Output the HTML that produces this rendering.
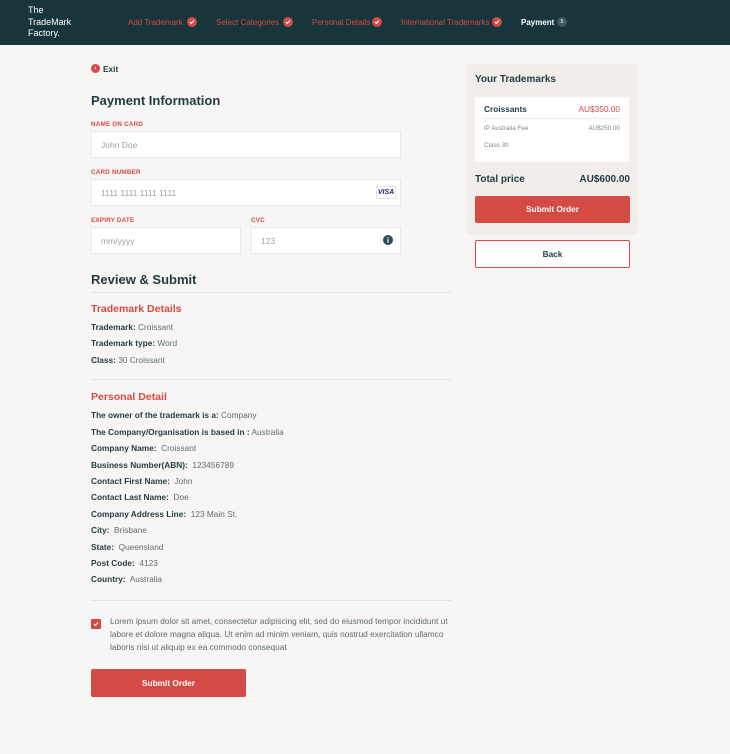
<!DOCTYPE html>
<html><head><meta charset="utf-8"><style>
*{margin:0;padding:0;box-sizing:border-box}
body{width:730px;height:754px;background:#f8f6f4;font-family:"Liberation Sans",sans-serif;position:relative;overflow:hidden;color:#1f3b40}
.a{position:absolute;white-space:nowrap}
.hdr{position:absolute;left:0;top:0;width:730px;height:45px;background:#17353a}
.logo{left:28px;top:5px;color:#fff;font-size:9px;line-height:11.5px;white-space:normal}
.nav{top:18px;font-size:8px;color:#d44b45}
.chk{width:10px;height:10px;border-radius:50%;background:#d44b45;top:17px}
.chk svg{position:absolute;left:2px;top:2px}
.lbl{font-size:6.3px;font-weight:bold;color:#d44b45;letter-spacing:.2px}
.inp{background:#fff;border:1px solid #ebe8e5;height:27px;font-size:8.5px;color:#9aa4a7;padding:8px 9px;position:absolute}
.row{font-size:8.3px;color:#5d6b6e;left:91px}
.row b{color:#1f3b40}
.h2{font-size:13px;font-weight:bold;left:91px}
.h3{font-size:10.5px;font-weight:bold;color:#d44b45;left:91px}
.hr{position:absolute;left:91px;width:361px;height:1px;background:#e6e3e0}
.r{text-align:right}
</style></head><body>
<div class="hdr"></div>
<div class="a logo">The<br>TradeMark<br>Factory.</div>
<div class="a nav" style="left:128px">Add Trademark</div>
<div class="a chk" style="left:187px"><svg width="6" height="6" viewBox="0 0 6 6"><path d="M1 3l1.4 1.4L5 1.5" stroke="#fff" stroke-width="1.1" fill="none"/></svg></div>
<div class="a nav" style="left:216px">Select Categories</div>
<div class="a chk" style="left:283px"><svg width="6" height="6" viewBox="0 0 6 6"><path d="M1 3l1.4 1.4L5 1.5" stroke="#fff" stroke-width="1.1" fill="none"/></svg></div>
<div class="a nav" style="left:312px">Personal Details</div>
<div class="a chk" style="left:372px"><svg width="6" height="6" viewBox="0 0 6 6"><path d="M1 3l1.4 1.4L5 1.5" stroke="#fff" stroke-width="1.1" fill="none"/></svg></div>
<div class="a nav" style="left:401px">International Trademarks</div>
<div class="a chk" style="left:492px"><svg width="6" height="6" viewBox="0 0 6 6"><path d="M1 3l1.4 1.4L5 1.5" stroke="#fff" stroke-width="1.1" fill="none"/></svg></div>
<div class="a nav" style="left:521px;color:#fff;font-weight:bold">Payment</div>
<div class="a" style="left:557px;top:17px;width:10px;height:10px;border-radius:50%;background:#3d5a60;color:#fff;font-size:5px;text-align:center;line-height:10px">5</div>

<div class="a" style="left:91px;top:64px;width:9px;height:9px;border-radius:50%;background:#d44b45;color:#fff;font-size:7px;line-height:9px;text-align:center;font-weight:bold">‹</div>
<div class="a" style="left:103px;top:64px;font-size:8.3px;font-weight:bold">Exit</div>

<div class="a h2" style="top:93px">Payment Information</div>
<div class="a lbl" style="left:91px;top:121px">NAME ON CARD</div>
<div class="inp" style="left:91px;top:131px;width:310px">John Doe</div>
<div class="a lbl" style="left:91px;top:169px">CARD NUMBER</div>
<div class="inp" style="left:91px;top:179px;width:310px">1111 1111 1111 1111</div>
<div class="a" style="left:376px;top:186px;width:20px;height:13px;border:1px solid #e6e3e0;background:#fff;font-size:7px;font-weight:bold;font-style:italic;color:#1a2a6c;text-align:center;line-height:11px">VISA</div>
<div class="a lbl" style="left:91px;top:217px">EXPIRY DATE</div>
<div class="inp" style="left:91px;top:227px;width:150px">mm/yyyy</div>
<div class="a lbl" style="left:251px;top:217px">CVC</div>
<div class="inp" style="left:251px;top:227px;width:150px">123</div>
<svg class="a" style="left:383px;top:235px" width="10" height="10" viewBox="0 0 10 10"><circle cx="5" cy="5" r="5" fill="#2f4a50"/><rect x="4.4" y="4.2" width="1.2" height="3.6" fill="#fff"/><circle cx="5" cy="2.9" r=".7" fill="#fff"/></svg>

<div class="a h2" style="top:272px">Review &amp; Submit</div>
<div class="hr" style="top:292px"></div>
<div class="a h3" style="top:303px">Trademark Details</div>
<div class="a row" style="top:322px"><b>Trademark:</b> Croissant</div>
<div class="a row" style="top:338px"><b>Trademark type:</b> Word</div>
<div class="a row" style="top:355px"><b>Class:</b> 30 Croissant</div>
<div class="hr" style="top:379px"></div>
<div class="a h3" style="top:391px">Personal Detail</div>
<div class="a row" style="top:410px"><b>The owner of the trademark is a:</b> Company</div>
<div class="a row" style="top:427px"><b>The Company/Organisation is based in :</b> Australia</div>
<div class="a row" style="top:443px"><b>Company Name:</b>&nbsp; Croissant</div>
<div class="a row" style="top:460px"><b>Business Number(ABN):</b>&nbsp; 123456789</div>
<div class="a row" style="top:476px"><b>Contact First Name:</b>&nbsp; John</div>
<div class="a row" style="top:492px"><b>Contact Last Name:</b>&nbsp; Doe</div>
<div class="a row" style="top:509px"><b>Company Address Line:</b>&nbsp; 123 Main St.</div>
<div class="a row" style="top:525px"><b>City:</b>&nbsp; Brisbane</div>
<div class="a row" style="top:542px"><b>State:</b>&nbsp; Queensland</div>
<div class="a row" style="top:558px"><b>Post Code:</b>&nbsp; 4123</div>
<div class="a row" style="top:574px"><b>Country:</b>&nbsp; Australia</div>
<div class="hr" style="top:600px"></div>
<div class="a" style="left:91px;top:619px;width:10px;height:10px;background:#d44b45;border-radius:1px"><svg style="position:absolute;left:2px;top:2px" width="6" height="6" viewBox="0 0 6 6"><path d="M1 3l1.4 1.4L5 1.5" stroke="#fff" stroke-width="1.1" fill="none"/></svg></div>
<div class="a" style="left:110px;top:615px;width:340px;white-space:normal;font-size:8.3px;line-height:13px;color:#5d6b6e">Lorem ipsum dolor sit amet, consectetur adipiscing elit, sed do eiusmod tempor incididunt ut labore et dolore magna aliqua. Ut enim ad minim veniam, quis nostrud exercitation ullamco laboris nisi ut aliquip ex ea commodo consequat</div>
<div class="a" style="left:91px;top:669px;width:155px;height:28px;background:#d44b45;border-radius:2px;color:#fff;font-size:8.3px;font-weight:bold;text-align:center;line-height:28px">Submit Order</div>

<div class="a" style="left:466px;top:64px;width:172px;height:171px;background:#f1edea;border-radius:4px"></div>
<div class="a" style="left:475px;top:74px;font-size:10px;font-weight:bold">Your Trademarks</div>
<div class="a" style="left:475px;top:97px;width:154px;height:65px;background:#fff;border-radius:2px"></div>
<div class="a" style="left:484px;top:104px;font-size:8.3px;font-weight:bold">Croissants</div>
<div class="a r" style="left:560px;width:60px;top:104px;font-size:8.3px;color:#d44b45">AU$350.00</div>
<div class="a" style="left:484px;top:118px;width:136px;height:1px;background:#eeeae7"></div>
<div class="a" style="left:484px;top:125px;font-size:6.3px;color:#7b878a">IP Australia Fee</div>
<div class="a r" style="left:560px;width:60px;top:125px;font-size:6.3px;color:#7b878a">AU$250.00</div>
<div class="a" style="left:484px;top:142px;font-size:6.3px;color:#7b878a">Class 30</div>
<div class="a" style="left:475px;top:174px;font-size:10px;font-weight:bold">Total price</div>
<div class="a r" style="left:560px;width:70px;top:174px;font-size:10px;font-weight:bold">AU$600.00</div>
<div class="a" style="left:475px;top:196px;width:155px;height:27px;background:#d44b45;border-radius:2px;color:#fff;font-size:8.3px;font-weight:bold;text-align:center;line-height:27px">Submit Order</div>
<div class="a" style="left:475px;top:240px;width:155px;height:28px;border:1px solid #d44b45;border-radius:2px;background:#fff;font-size:8.3px;font-weight:bold;text-align:center;line-height:26px">Back</div>
</body></html>
